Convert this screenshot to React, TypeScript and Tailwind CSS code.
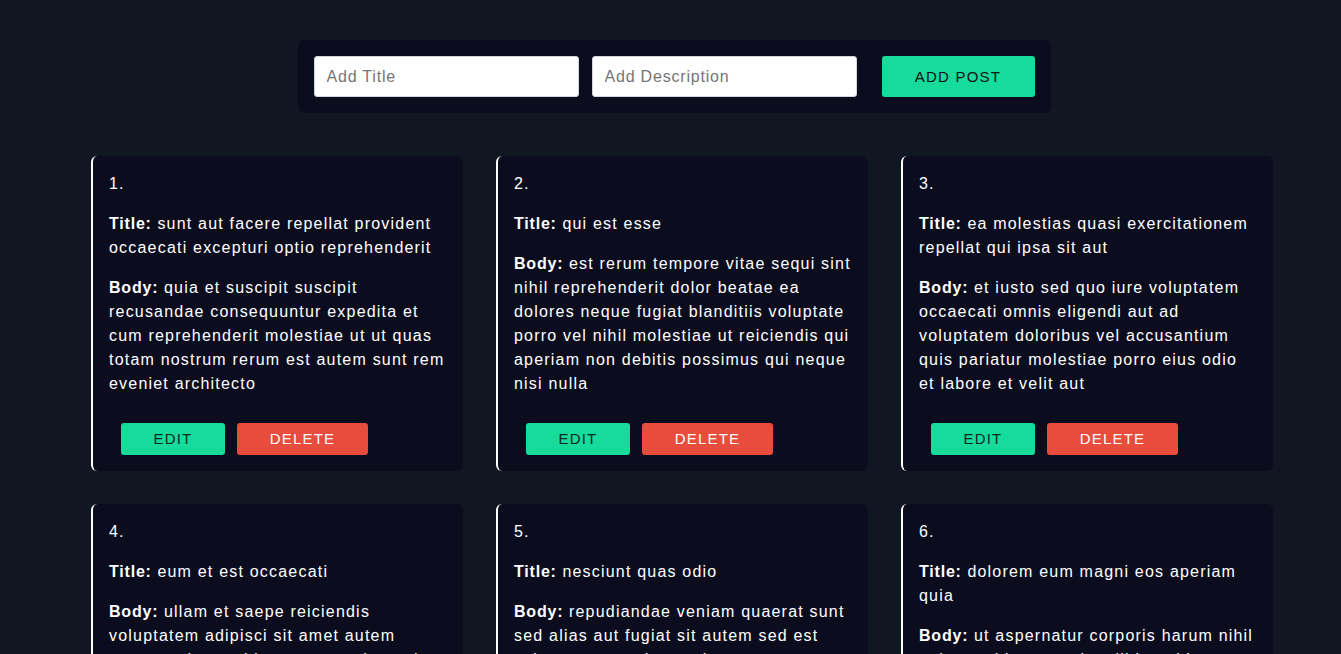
import { useState } from 'react'

type Post = {
  id: number
  title: string
  body: string
}

const initialPosts: Post[] = [
  {
    id: 1,
    title: 'sunt aut facere repellat provident occaecati excepturi optio reprehenderit',
    body: 'quia et suscipit suscipit recusandae consequuntur expedita et cum reprehenderit molestiae ut ut quas totam nostrum rerum est autem sunt rem eveniet architecto',
  },
  {
    id: 2,
    title: 'qui est esse',
    body: 'est rerum tempore vitae sequi sint nihil reprehenderit dolor beatae ea dolores neque fugiat blanditiis voluptate porro vel nihil molestiae ut reiciendis qui aperiam non debitis possimus qui neque nisi nulla',
  },
  {
    id: 3,
    title: 'ea molestias quasi exercitationem repellat qui ipsa sit aut',
    body: 'et iusto sed quo iure voluptatem occaecati omnis eligendi aut ad voluptatem doloribus vel accusantium quis pariatur molestiae porro eius odio et labore et velit aut',
  },
  {
    id: 4,
    title: 'eum et est occaecati',
    body: 'ullam et saepe reiciendis voluptatem adipisci sit amet autem assumenda provident rerum culpa quis hic commodi nesciunt rem tenetur doloremque ipsam iure quis sunt voluptatem rerum illo velit',
  },
  {
    id: 5,
    title: 'nesciunt quas odio',
    body: 'repudiandae veniam quaerat sunt sed alias aut fugiat sit autem sed est voluptatem omnis possimus esse voluptatibus quis est aut tenetur dolor neque',
  },
  {
    id: 6,
    title: 'dolorem eum magni eos aperiam quia',
    body: 'ut aspernatur corporis harum nihil quis provident sequi mollitia nobis aliquid molestiae perspiciatis et ea nemo ab reprehenderit accusantium quas voluptate dolores velit et doloremque molestiae',
  },
]

export default function App() {
  const [posts, setPosts] = useState<Post[]>(initialPosts)
  const [title, setTitle] = useState('')
  const [desc, setDesc] = useState('')

  function addPost() {
    if (!title.trim()) return
    setPosts([...posts, { id: posts.length + 1, title, body: desc }])
    setTitle('')
    setDesc('')
  }

  return (
    <div className="min-h-screen bg-[#111722] pt-10 pb-10 font-['Liberation_Sans',Arial,sans-serif] tracking-[1.2px] text-white">
      <div className="flex justify-center pl-[7px]">
        <div className="flex items-center rounded-md bg-[#0b0d1f] p-4">
          <input
            value={title}
            onChange={(e) => setTitle(e.target.value)}
            placeholder="Add Title"
            className="h-[41px] w-[265px] rounded-[3px] border border-gray-300 bg-white px-3 text-base tracking-[0.8px] text-black placeholder:text-[#757575] outline-none"
          />
          <input
            value={desc}
            onChange={(e) => setDesc(e.target.value)}
            placeholder="Add Description"
            className="ml-[13px] h-[41px] w-[265px] rounded-[3px] border border-gray-300 bg-white px-3 text-base tracking-[0.8px] text-black placeholder:text-[#757575] outline-none"
          />
          <button
            type="button"
            onClick={addPost}
            className="ml-[25px] h-[41px] w-[153px] rounded-[3px] bg-[#16db9b] pt-[2px] text-[15px] tracking-[1.2px] text-[#111] uppercase"
          >
            Add Post
          </button>
        </div>
      </div>

      <div className="mt-[43px] grid grid-cols-[372px_372px_372px] gap-x-[33px] gap-y-[33px] pl-[91px]">
        {posts.map((p) => (
          <div key={p.id} className="flex flex-col rounded-md border-l-2 border-white bg-[#0b0d1f] px-4 pt-4 pb-4 text-base leading-6">
            <p>{p.id}.</p>
            <p className="mt-4">
              <span className="font-bold tracking-[0.8px]">Title:</span> {p.title}
            </p>
            <p className="mt-4 flex-1">
              <span className="font-bold tracking-[0.8px]">Body:</span> {p.body}
            </p>
            <div className="mt-[27px] flex gap-3 pl-3">
              <button
                type="button"
                className="h-8 w-[104px] rounded-[3px] bg-[#16db9b] text-[15px] tracking-[1.2px] text-[#0a2a1f]"
              >
                EDIT
              </button>
              <button
                type="button"
                onClick={() => setPosts(posts.filter((x) => x.id !== p.id))}
                className="h-8 w-[131px] rounded-[3px] bg-[#e74c3c] text-[15px] tracking-[1.2px] text-white"
              >
                DELETE
              </button>
            </div>
          </div>
        ))}
      </div>
    </div>
  )
}
